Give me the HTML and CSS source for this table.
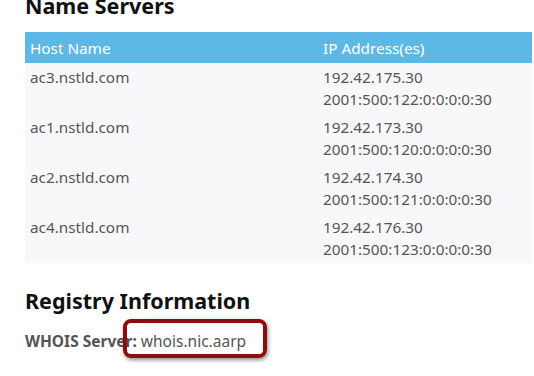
FILE: index.html
```html
<!DOCTYPE html>
<html lang="en">
<head>
    <meta charset="UTF-8">
    <title>Name Servers</title>
    <link rel="stylesheet" href="styles.css">
</head>
<body>

    <!-- Name Servers -->
    <h2 class="title">Name Servers</h2>
    <table class="servers">
        <thead>
            <tr>
                <th class="host">Host Name</th>
                <th>IP Address(es)</th>
            </tr>
        </thead>
        <tbody>
            <tr>
                <td>ac3.nstld.com</td>
                <td>192.42.175.30<br>2001:500:122:0:0:0:0:30</td>
            </tr>
            <tr>
                <td>ac1.nstld.com</td>
                <td>192.42.173.30<br>2001:500:120:0:0:0:0:30</td>
            </tr>
            <tr>
                <td>ac2.nstld.com</td>
                <td>192.42.174.30<br>2001:500:121:0:0:0:0:30</td>
            </tr>
            <tr>
                <td>ac4.nstld.com</td>
                <td>192.42.176.30<br>2001:500:123:0:0:0:0:30</td>
            </tr>
        </tbody>
    </table>

    <!-- Registry Information -->
    <h2 class="title registry">Registry Information</h2>
    <p class="info"><b>WHOIS Server:</b> <span class="marked">whois.nic.aarp</span></p>

</body>
</html>
```

FILE: styles.css
```css
/* General */
body {
    font-family: 'Noto Sans', sans-serif;
    margin: 0;
    padding: 0 2px 0 25px;
    min-height: 376px;
    box-sizing: border-box;
    background: #fff;
    color: #555;
}

.title {
    font-size: 21.5px;
    line-height: 28px;
    font-weight: bold;
    color: #111;
    margin: -8px 0 12px;
}

/* Table */
.servers {
    width: 100%;
    table-layout: fixed;
    border-collapse: collapse;
    background-color: #f8f8fb;
    font-size: 15.3px;
    line-height: 22px;
}

.servers th {
    background-color: #5db8e5;
    color: #fff;
    font-weight: normal;
    text-align: left;
    padding: 5px 5px 4px;
    height: 21px;
}

.servers th.host {
    width: 283px;
}

.servers td {
    vertical-align: top;
    padding: 3px 5px;
}

/* Registry */
.registry {
    margin: 24px 0 0;
}

.info {
    font-size: 15.5px;
    line-height: 20px;
    margin: 16px 0 0;
}

.marked {
    position: relative;
}

.marked::after {
    content: "";
    position: absolute;
    left: -18px;
    right: -21px;
    top: -11px;
    bottom: -6px;
    border: 4px solid #8b0e0e;
    border-radius: 8px;
    box-shadow: 1px 2px 4px rgba(0, 0, 0, 0.45);
}
```
